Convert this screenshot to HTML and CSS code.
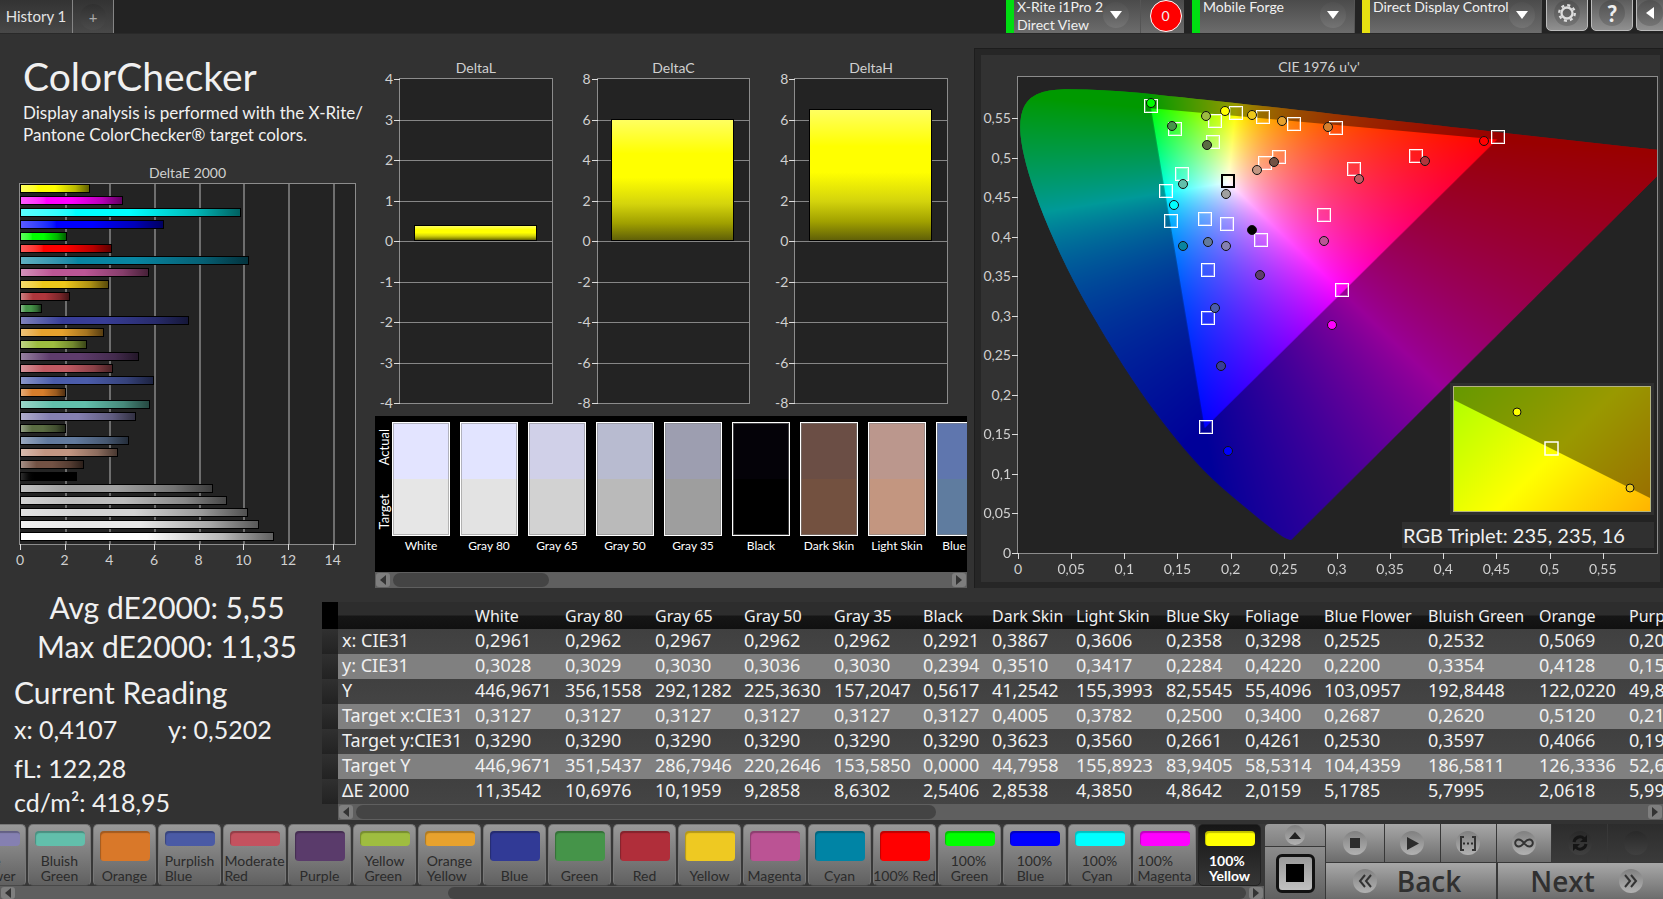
FILE: index.html
```html
<!DOCTYPE html>
<html lang="en">
<head>
<meta charset="utf-8">
<title>ColorChecker</title>
<link rel="stylesheet" href="styles.css">
</head>
<body>
<header class="topbar">
  <nav class="tabs">
    <button class="tab">History 1</button>
    <button class="tab tab-add" aria-label="Add history"><span class="knob">+</span></button>
  </nav>
  <div class="devices">
    <div class="device device-meter">
      <button class="picker green"><span>X-Rite i1Pro 2<br>Direct View</span><span class="knob"><i class="down"></i></span></button>
      <output class="counter"><span>0</span></output>
    </div>
    <button class="picker device-source green"><span>Mobile Forge</span><span class="knob"><i class="down"></i></span></button>
    <button class="picker device-display yellow"><span>Direct Display Control</span><span class="knob"><i class="down"></i></span></button>
    <button class="tool" aria-label="Settings"><span class="knob"><svg viewBox="0 0 24 24" width="22" height="22"><circle cx="12" cy="12" r="6" fill="none" stroke="#ddd" stroke-width="2.500"/><circle cx="12" cy="12" r="8.500" fill="none" stroke="#ddd" stroke-width="2.500" stroke-dasharray="3.300 3.376"/></svg></span></button>
    <button class="tool" aria-label="Help"><span class="knob help">?</span></button>
    <button class="tool" aria-label="Collapse"><span class="knob"><i class="left"></i></span></button>
  </div>
</header>

<main class="charts">
  <section class="summary">
    <h1>ColorChecker</h1>
    <p>Display analysis is performed with the X-Rite/<br>Pantone ColorChecker® target colors.</p>
    <h2 class="chart-title">DeltaE 2000</h2>
    <div class="plot de-plot" id="de"></div>
  </section>

  <section class="middle">
    <div class="deltas" id="deltas"></div>
    <div class="compare">
      <div class="compare-row">
        <div class="compare-side"><span>Actual</span><span>Target</span></div>
        <div class="swatches" id="swatches"></div>
      </div>
      <div class="scroll"><button aria-label="Scroll left"><i class="left"></i></button><div class="track"><div class="thumb thumb-compare"></div></div><button aria-label="Scroll right"><i class="right"></i></button></div>
    </div>
  </section>

  <section class="cie">
    <div class="cie-inner">
      <h2 class="chart-title">CIE 1976 u'v'</h2>
      <div class="plot cie-plot" id="cie">
        <canvas id="gamut" width="640" height="476"></canvas>
        <div class="inset">
          <svg viewBox="0 0 196 124" preserveAspectRatio="none">
            <defs><linearGradient id="yg" gradientUnits="userSpaceOnUse" x1="0" y1="0" x2="160" y2="160"><stop offset="0" stop-color="#af0"/><stop offset=".52" stop-color="#ff0"/><stop offset="1" stop-color="#ffb400"/></linearGradient></defs>
            <rect width="196" height="124" fill="url(#yg)"/>
            <path d="M0 13L196 111V0H0z" fill="#000" opacity=".4"/>
            <rect x="91" y="55" width="13" height="13" fill="none" stroke="#fff" stroke-width="1.500"/>
            <circle cx="63" cy="25" r="4" fill="#ff0" stroke="#111"/>
            <circle cx="176" cy="101" r="4" fill="#eec81b" stroke="#111"/>
          </svg>
        </div>
        <div class="triplet">RGB Triplet: 235, 235, 16</div>
      </div>
    </div>
  </section>
</main>

<section class="data">
  <div class="stats">
    <p class="big">Avg dE2000: 5,55</p>
    <p class="big">Max dE2000: 11,35</p>
    <h2>Current Reading</h2>
    <p class="pair"><span>x: 0,4107</span><span>y: 0,5202</span></p>
    <p class="lum">fL: 122,28</p>
    <p>cd/m²: 418,95</p>
  </div>
  <div class="table-area">
    <div class="table-clip"><table id="readings"></table></div>
    <div class="scroll scroll-table"><button aria-label="Scroll left"><i class="left"></i></button><div class="track"><div class="thumb thumb-table"></div></div><button aria-label="Scroll right"><i class="right"></i></button></div>
  </div>
</section>

<footer class="bottom">
  <div class="patches">
    <div class="patch-list" id="patches"></div>
    <div class="scroll scroll-patches"><button aria-label="Scroll left"><i class="left"></i></button><div class="track"><div class="thumb thumb-patches"></div></div><button aria-label="Scroll right"><i class="right"></i></button></div>
  </div>
  <div class="stopper">
    <button class="expand" aria-label="Expand"><span class="disc"><i class="up"></i></span></button>
    <button class="window" aria-label="Pattern window"><span></span></button>
  </div>
  <div class="transport">
    <div class="keys">
      <button aria-label="Stop"><span class="disc"><svg viewBox="0 0 24 24"><path d="M7 7h10v10H7z"/></svg></span></button>
      <button aria-label="Play"><span class="disc"><svg viewBox="0 0 24 24"><path d="M7 6l12 6.500L7 19z"/></svg></span></button>
      <button aria-label="Measure series"><span class="disc"><svg viewBox="0 0 24 24"><path d="M8 6H5v13h3M16 6h3v13h-3" fill="none" stroke="#333" stroke-width="2"/><path d="M7 11.500h2v2H7zM11 11.500h2v2h-2zM15 11.500h2v2h-2z"/></svg></span></button>
      <button aria-label="Continuous"><span class="disc"><svg viewBox="0 0 24 24"><path d="M12 12C10 9.500 8.500 8.500 6.700 8.500a3.500 3.500 0 0 0 0 7C8.500 15.500 10 14.500 12 12s3.500-3.500 5.300-3.500a3.500 3.500 0 0 1 0 7C15.500 15.500 14 14.500 12 12z" fill="none" stroke="#333" stroke-width="2"/></svg></span></button>
      <button class="off" aria-label="Refresh"><span class="disc"><svg viewBox="0 0 24 24"><path d="M6 11a6 6 0 0 1 10-3.500M18 13a6 6 0 0 1-10 3.500" fill="none" stroke="#151515" stroke-width="3"/><path d="M19 4v7h-7zM5 20v-7h7z" fill="#151515"/></svg></span></button>
      <button class="off" aria-label="Record"><span class="disc"></span></button>
    </div>
    <div class="steps">
      <button><span class="disc"><svg viewBox="0 0 24 24"><path d="M12 6l-5 6 5 6M18 6l-5 6 5 6" fill="none" stroke="#333" stroke-width="2"/></svg></span>Back</button>
      <button>Next<span class="disc"><svg viewBox="0 0 24 24"><path d="M6 6l5 6-5 6M12 6l5 6-5 6" fill="none" stroke="#333" stroke-width="2"/></svg></span></button>
    </div>
  </div>
</footer>
<script src="app.js"></script>
</body>
</html>
```
FILE: styles.css
```css
* { box-sizing: border-box; }
body {
  margin: 0; height: 100vh; min-height: 880px; display: flex; flex-direction: column;
  overflow: hidden; background: #323232; color: #f0f0f0;
  font-family: Lato, "Open Sans", sans-serif; font-size: 14px;
}
h1, h2, p { margin: 0; font-weight: 400; }
button { border: 0; padding: 0; margin: 0; font: inherit; color: inherit; background: none; }
i { display: block; width: 0; height: 0; }
.down { border: 6px solid transparent; border-top: 8px solid #fff; border-bottom: 0; }
.up { border: 6px solid transparent; border-bottom: 7px solid #222; border-top: 0; }
.left { border: 6px solid transparent; border-right: 8px solid #fff; border-left: 0; }
.right { border: 5px solid transparent; border-left: 6px solid #333; border-right: 0; }

/* top bar */
.topbar { height: 34px; flex: none; background: #232323; display: flex; justify-content: space-between; border-bottom: 1px solid #292929; overflow: hidden; }
.tabs { display: flex; }
.tab { width: 73px; border-right: 1px solid #858585; background: linear-gradient(#333, #484848); font-size: 15px; color: #e4e4e4; padding-bottom: 2px; }
.tab-add { width: 41px; display: flex; align-items: center; justify-content: center; padding: 0; }
.knob { width: 26px; height: 26px; flex: none; border-radius: 50%; background: linear-gradient(#505050, #747474); display: flex; align-items: center; justify-content: center; }
.tab-add .knob { background: linear-gradient(#303030, #4b4b4b); color: #aaa; }
.devices { display: flex; align-items: flex-end; }
.device { display: flex; margin-right: 8px; }
.picker {
  height: 35px; display: flex; justify-content: space-between; align-items: flex-start; text-align: left; white-space: nowrap;
  font-size: 14px; line-height: 18px; padding: 0 8px 0 3px; border-left: 8px solid; border-right: 1px solid #555;
  background: linear-gradient(#494949, #6c6c6c);
}
.picker .knob { margin-top: 4px; }
.green { border-left-color: #0d1; }
.yellow { border-left-color: #e6e011; }
.device-meter .picker { width: 135px; padding-right: 12px; }
.device-source { width: 163px; margin-right: 7px; }
.device-display { width: 180px; margin-right: 4px; }
.counter { width: 43px; display: flex; align-items: center; justify-content: center; padding-left: 6px; background: linear-gradient(#494949, #6c6c6c); }
.counter span { width: 32px; height: 32px; flex: none; border: 1px solid #fff; border-radius: 50%; background: #f00; display: flex; align-items: center; justify-content: center; }
.tool { width: 42px; height: 36px; margin: 0 3px 2px 0; border: 1px solid #bbb; border-radius: 5px; background: linear-gradient(#555, #909090); display: flex; align-items: center; justify-content: center; }
.tool:last-child { width: 27px; margin-right: 0; border-right: 0; border-radius: 5px 0 0 5px; justify-content: flex-end; }
.help { font-size: 22px; font-weight: 900; color: #eee; }

/* chart row */
.charts { flex: 1; min-height: 0; display: flex; }
.summary { width: 356px; margin-right: 19px; flex: none; padding: 20px 0 43px 19px; display: flex; flex-direction: column; }
.summary h1 { font-size: 39px; line-height: 45px; padding-left: 4px; margin-bottom: 3px; }
.summary p { font-size: 17px; line-height: 22px; padding-left: 4px; white-space: nowrap; }
.chart-title { font-size: 14px; line-height: 20px; text-align: center; color: #d0d0d0; }
.summary .chart-title { margin-top: 17px; }
.plot { position: relative; flex: 1; min-height: 0; background: #232323; border: 1px solid #8c8c8c; }
.line-v { position: absolute; top: 0; bottom: 0; width: 2px; background: #6e6e6e; }
.line-h { position: absolute; left: 0; right: 0; height: 1px; background: #868686; }
.tick-x { position: absolute; top: 100%; width: 60px; margin-left: -30px; padding-top: 6px; text-align: center; line-height: 20px; color: #d0d0d0; }
.tick-x::before { content: ""; position: absolute; left: 30px; top: 0; width: 1px; height: 6px; background: #ddd; }
.tick-y { position: absolute; right: 100%; width: 50px; margin-top: -10px; padding-right: 7px; text-align: right; line-height: 20px; color: #d0d0d0; }
.tick-y::after { content: ""; position: absolute; right: 0; top: 10px; width: 6px; height: 1px; background: #ddd; }
.bars { position: relative; height: 100%; display: grid; grid-auto-rows: 1fr; align-items: start; }
.bar { height: 9px; border: 1px solid #000; }

.middle { width: 592px; flex: none; margin-right: 7px; display: flex; flex-direction: column; }
.deltas { flex: 1; min-height: 0; display: flex; gap: 44px; padding: 24px 19px 12px 24px; }
.delta { flex: 1; display: flex; flex-direction: column; }
.delta .bar { position: absolute; left: 9%; right: 10%; height: auto; background: linear-gradient(#ffff60, #ff0 28%, #ff0 48%, #d4d40c 70%, #a0a000 86%, #606008); }
.compare { height: 172px; background: #000; color: #fff; display: flex; flex-direction: column; }
.compare-row { flex: 1; display: flex; padding: 6px 0 0; overflow: hidden; }
.compare-side { width: 17px; height: 114px; flex: none; display: flex; flex-direction: column; justify-content: space-between; align-items: center; padding: 7px 0; }
.compare-side span { writing-mode: vertical-rl; transform: rotate(180deg); font-size: 13px; line-height: 16px; }
.swatches { display: flex; gap: 10px; }
.swatch { width: 58px; flex: none; text-align: center; font-size: 12px; line-height: 20px; white-space: nowrap; }
.swatch-box { height: 114px; border: 1px solid #fff; outline: 1px solid rgba(128,128,128,.5); outline-offset: -2px; }

/* scroll bars */
.scroll { height: 16px; flex: none; display: flex; align-items: center; background: #5f5f5f; padding: 0 1px; gap: 3px; }
.scroll button { width: 14px; height: 14px; border-radius: 3px; background: #7e7e7e; display: flex; align-items: center; justify-content: center; }
.scroll .left { border-width: 5px 6px 5px 0; border-right-color: #333; }
.track { flex: 1; height: 14px; }
.thumb { height: 100%; border-radius: 7px; background: #444; }
.thumb-compare { width: 28%; }
.thumb-table { width: 45%; }
.thumb-patches { width: 65%; margin-left: auto; }

/* chromaticity panel */
.cie { flex: 1; min-width: 0; margin-top: 14px; padding: 6px 3px 6px 6px; background: #262626; border: 1px solid #1d1d1d; border-width: 1px 0 0 1px; }
.cie-inner { height: 100%; background: #323232; padding: 2px 2px 28px 36px; display: flex; flex-direction: column; }
.cie .chart-title { padding-right: 37px; line-height: 19px; }
#gamut { position: absolute; width: 100%; height: 100%; }
.target { position: absolute; width: 14px; height: 14px; margin: -7px -6px; border: 1px solid #fff; outline: 1px solid rgba(255,255,255,.3); outline-offset: -2px; }
.target-white { border: 2px solid #000; outline: 0; }
.reading { position: absolute; width: 10px; height: 10px; margin: -5px; border: 1px solid #111; border-radius: 50%; }
.inset { position: absolute; right: 3px; bottom: 38px; width: 204px; height: 132px; border: 3px solid #2f2f2f; }
.inset svg { display: block; width: 100%; height: 100%; border: 1px solid #b4b480; }
.triplet { position: absolute; right: 3px; bottom: 5px; width: 252px; line-height: 26px; font-size: 20px; padding-left: 1px; background: #303030; white-space: nowrap; }

/* readings */
.data { flex: none; display: flex; padding-bottom: 4px; }
.stats { width: 322px; height: 232px; flex: none; padding-left: 14px; white-space: nowrap; }
.stats p { font-size: 25px; line-height: 34px; }
.stats .big { font-size: 30px; line-height: 39px; text-align: center; padding-right: 2px; }
.stats h2 { font-size: 30px; line-height: 40px; margin-top: 6px; }
.pair { display: flex; }
.pair span { width: 158px; }
.stats .lum { margin-top: 5px; }
.table-area { flex: 1; min-width: 0; padding-top: 14px; }
.table-clip { overflow: hidden; }
table { border-collapse: collapse; table-layout: fixed; width: 1410px; font-family: "Noto Sans", sans-serif; font-size: 18px; }
th, td { height: 25px; padding: 0 0 0 4px; line-height: 24px; text-align: left; font-weight: 400; white-space: nowrap; overflow: hidden; }
td { line-height: 23px; vertical-align: top; }
thead th { height: 27px; font-size: 16px; background: linear-gradient(#2d2d2d 0 48%, #161616 52%, #101010); }
thead th:first-child { background: #000; }
tbody tr { background: linear-gradient(#404040, #444); }
tbody tr:nth-child(even) { background: #808080; }
tbody td:first-child { background: linear-gradient(#303030, #222); }
.scroll-table { margin-left: 16px; }

/* bottom strip */
.bottom { height: 75px; flex: none; display: flex; background: #383838; }
.patches { flex: 1; min-width: 0; display: flex; flex-direction: column; }
.patch-list { flex: 1; display: flex; gap: 2px; justify-content: flex-end; overflow: hidden; padding: 0 3px 0 0; }
.patch {
  width: 63px; height: 62px; flex: none; border-radius: 5px; padding: 6px 0 2px; display: flex; flex-direction: column; align-items: center; justify-content: space-between;
  background: linear-gradient(#999, #606060); border: 1px solid #777; border-bottom-color: #484848; color: #2b2b2b; font-size: 14px; line-height: 15px; text-align: left; white-space: nowrap;
}
.chip { width: 50px; height: 15px; flex: none; border-radius: 4px; box-shadow: inset 1px 2px 1px rgba(0,0,0,.25); }
.chip-tall { height: 30px; }
.patch-active { background: linear-gradient(#161616, #363636); border-color: #222; color: #fff; font-weight: 700; }
.scroll-patches { height: 13px; }
.scroll-patches button, .scroll-patches .track { height: 12px; }
.stopper { width: 62px; display: flex; flex-direction: column; padding: 0 1px; gap: 1px; }
.expand { height: 22px; border-radius: 4px 4px 0 0; background: linear-gradient(#9a9a9a, #808080); display: flex; align-items: center; justify-content: center; }
.expand .disc { width: 20px; height: 20px; }
.window { flex: 1; background: linear-gradient(#8c8c8c, #606060); display: flex; align-items: center; justify-content: center; }
.window span { width: 39px; height: 39px; border: 3px solid #111; border-radius: 6px; background: linear-gradient(#000, #000) center / 18px 18px no-repeat, linear-gradient(#999, #c0c0c0); }
.transport { width: 337px; display: grid; grid-template-rows: 38px 36px; gap: 1px; }
.keys { display: grid; grid-template-columns: 58px repeat(5, 1fr); gap: 1px; }
.steps { display: grid; grid-template-columns: 1fr 165px; gap: 2px; }
.keys button, .steps button { background: linear-gradient(#a8a8a8, #6c6c6c); display: flex; align-items: center; justify-content: center; }
.keys .off { background: linear-gradient(#2c2c2c, #3b3b3b); }
.disc { width: 24px; height: 24px; flex: none; border-radius: 50%; background: linear-gradient(#808080, #b2b2b2); display: flex; align-items: center; justify-content: center; }
.off .disc { background: linear-gradient(#292929, #404040); }
.disc svg { width: 24px; height: 24px; fill: #2c2c2c; }
.steps button { gap: 20px; font-family: "Open Sans", sans-serif; font-weight: 600; font-size: 28px; line-height: 34px; color: #303030; padding-right: 8px; }
.steps button + button { gap: 24px; padding: 0 0 0 12px; }
```
FILE: app.js
```js
const byId = id => document.getElementById(id);
const add = (parent, cls, css = {}, text = "", tag = "div") => {
  const el = document.createElement(tag);
  if (cls) el.className = cls;
  Object.assign(el.style, css);
  el.textContent = text;
  parent.append(el);
  return el;
};
const comma = n => String(n).replace(".", ",");

/* DeltaE 2000 */
const de = [
  ["#ffff00", 3.15], ["#ff00ff", 4.6], ["#00ffff", 9.9], ["#0000ff", 6.45], ["#00ff00", 2.1], ["#ff0000", 4.12],
  ["#0885a1", 10.25], ["#bb5695", 5.77], ["#eec81b", 4], ["#af363c", 2.23], ["#469449", 1], ["#383d96", 7.57],
  ["#e6a22e", 3.77], ["#9dbc40", 3.02], ["#5e3c6c", 5.33], ["#c15a63", 4.17], ["#4b5caa", 5.99], ["#d67e2c", 2.06],
  ["#62bfab", 5.8], ["#8580b1", 5.18], ["#5a6c42", 2.06], ["#627a9d", 4.86], ["#c29682", 4.385], ["#735244", 2.85],
  ["#000000", 2.54], ["#a0a0a0", 8.63], ["#bcbcbc", 9.286], ["#d4d4d4", 10.196], ["#e8e8e8", 10.7], ["#ffffff", 11.354]
];
const dePlot = byId("de");
for (let n = 0; n < 15; n += 2) {
  const left = n / 15 * 100 + "%";
  if (n) add(dePlot, "line-v", { left });
  add(dePlot, "tick-x", { left }, n);
}
const bars = add(dePlot, "bars");
for (const [c, v] of de) {
  add(bars, "bar", {
    width: v / 15 * 100 + "%",
    background: `linear-gradient(90deg, color-mix(in srgb, ${c} 65%, #fff ${c === "#000000" ? 15 : 35}%), ${c} 25%, ${c} 50%, color-mix(in srgb, ${c} 72%, #000) 80%, color-mix(in srgb, ${c} 38%, #000))`
  });
}

/* DeltaL, DeltaC, DeltaH */
for (const [name, max, value] of [["DeltaL", 4, 0.4], ["DeltaC", 8, 6.02], ["DeltaH", 8, 6.5]]) {
  const box = add(byId("deltas"), "delta");
  add(box, "chart-title", {}, name, "h2");
  const plot = add(box, "plot");
  for (let k = -4; k <= 4; k++) {
    const top = (4 - k) / 8 * 100 + "%";
    if (Math.abs(k) < 4) add(plot, "line-h", { top });
    add(plot, "tick-y", { top }, k * max / 4);
  }
  add(plot, "bar", { bottom: "50%", top: (1 - value / max) * 50 + "%" });
}

/* Actual / target swatches */
for (const [name, a, t] of [
  ["White", "#e3e4ff", "#e6e6e6"], ["Gray 80", "#e2e4ff", "#e3e3e3"], ["Gray 65", "#d0d0e8", "#d2d2d2"],
  ["Gray 50", "#b8bbd0", "#bababa"], ["Gray 35", "#9d9eb0", "#9e9e9e"], ["Black", "#040208", "#000"],
  ["Dark Skin", "#6b4e45", "#735140"], ["Light Skin", "#bb978d", "#c39680"], ["Blue Sky", "#5f76ae", "#5f7c9f"]
]) {
  const s = add(byId("swatches"), "swatch");
  add(s, "swatch-box", { background: `linear-gradient(${a} 50%, ${t} 50%)` });
  s.append(name);
}

/* CIE 1976 diagram */
const cie = byId("cie");
const U = 0.601, V = 0.602;
for (let k = 0; k < 12; k++) {
  const t = k * 5 / 100;
  add(cie, "tick-x", { left: t / U * 100 + "%" }, comma(t));
  add(cie, "tick-y", { top: (1 - t / V) * 100 + "%" }, comma(t));
}
const canvas = byId("gamut"), ctx = canvas.getContext("2d");
const W = canvas.width, H = canvas.height;
const locus = [
  [.1741, .005], [.1714, .0051], [.1644, .0109], [.1566, .0177], [.144, .0297], [.1355, .0399], [.1241, .0578],
  [.1096, .0868], [.0913, .1327], [.0687, .2007], [.0454, .295], [.0235, .4127], [.0082, .5384], [.0039, .6548],
  [.0139, .7502], [.0389, .812], [.0743, .8338], [.1142, .8262], [.1547, .8059], [.2296, .7543], [.3016, .6923],
  [.3731, .6245], [.4441, .5547], [.5125, .4866], [.5752, .4242], [.627, .3725], [.6915, .3083], [.7347, .2653]
];
const toPx = ([x, y]) => {
  const d = -2 * x + 12 * y + 3;
  return [4 * x / d / U * W, (1 - 9 * y / d / V) * H];
};
const img = new ImageData(W, H);
for (let j = 0; j < H; j++) {
  for (let i = 0; i < W; i++) {
    const u = (i + .5) / W * U, v = (1 - (j + .5) / H) * V;
    const X = 9 * u / (4 * v), Z = (12 - 3 * u - 20 * v) / (4 * v);
    const rgb = [3.2406 * X - 1.5372 - .4986 * Z, -.9689 * X + 1.8758 + .0415 * Z, .0557 * X - .204 + 1.057 * Z].map(c => Math.max(c, 0));
    const m = Math.max(...rgb), o = (j * W + i) * 4;
    rgb.forEach((c, k) => { img.data[o + k] = 255 * Math.pow(c / m, 1 / 1.15); });
    img.data[o + 3] = 255;
  }
}
const full = document.createElement("canvas");
full.width = W;
full.height = H;
full.getContext("2d").putImageData(img, 0, 0);
const outline = new Path2D();
const pts = locus.map(toPx);
outline.moveTo(...pts[0]);
for (let k = 1; k < pts.length - 1; k++) {
  const [x, y] = pts[k], [nx, ny] = pts[k + 1];
  outline.quadraticCurveTo(x, y, (x + nx) / 2, (y + ny) / 2);
}
outline.lineTo(...pts[pts.length - 1]);
outline.closePath();
ctx.clip(outline);
ctx.drawImage(full, 0, 0);
const shade = new Path2D();
shade.rect(0, 0, W, H);
[[.64, .33], [.3, .6], [.15, .06]].map(toPx).forEach((p, k) => k ? shade.lineTo(...p) : shade.moveTo(...p));
shade.closePath();
ctx.fillStyle = "rgba(0,0,0,.4)";
ctx.fill(shade, "evenodd");

const at = (x, y) => ({ left: x / 640 * 100 + "%", top: y / 476 * 100 + "%" });
for (const [x, y] of [
  [132, 29], [156, 52], [196, 44], [217, 36], [244, 40], [275, 47], [194, 65], [246, 86], [260, 80], [163, 97],
  [147, 114], [152, 144], [186, 142], [208, 147], [242, 163], [189, 193], [189, 241], [187, 350], [317, 51],
  [336, 92], [398, 79], [480, 60], [305, 138], [324, 213]
]) add(cie, "target", at(x, y));
add(cie, "target target-white", at(209, 104));
for (const [x, y, background] of [
  [133, 26, "#00ff00"], [154, 49, "#469449"], [188, 39, "#9dbc40"], [207, 34, "#ffff00"], [234, 38, "#eec81b"],
  [264, 44, "#e6a22e"], [189, 68, "#5a6c42"], [239, 93, "#c29682"], [256, 85, "#735244"], [165, 107, "#62bfab"],
  [208, 117, "#a0a0a0"], [156, 128, "#00ffff"], [234, 153, "#000"], [165, 169, "#0885a1"], [190, 165, "#627a9d"],
  [208, 169, "#8580b1"], [242, 198, "#5e3c6c"], [197, 231, "#4b5caa"], [310, 50, "#d67e2c"], [467, 64, "#ff0000"],
  [408, 84, "#af363c"], [342, 102, "#c15a63"], [306, 164, "#bb5695"], [314, 248, "#ff00ff"], [203, 289, "#383d96"],
  [210, 374, "#0000ff"]
]) add(cie, "reading", { ...at(x, y), background });

/* Readings table */
const widths = [16, 133, 90, 90, 89, 90, 89, 69, 84, 90, 79, 79, 104, 111, 90, 107];
const head = ["", "", "White", "Gray 80", "Gray 65", "Gray 50", "Gray 35", "Black", "Dark Skin", "Light Skin", "Blue Sky", "Foliage", "Blue Flower", "Bluish Green", "Orange", "Purplish Blue"];
const rows = `x: CIE31|0,2961|0,2962|0,2967|0,2962|0,2962|0,2921|0,3867|0,3606|0,2358|0,3298|0,2525|0,2532|0,5069|0,20
y: CIE31|0,3028|0,3029|0,3030|0,3036|0,3030|0,2394|0,3510|0,3417|0,2284|0,4220|0,2200|0,3354|0,4128|0,15
Y|446,9671|356,1558|292,1282|225,3630|157,2047|0,5617|41,2542|155,3993|82,5545|55,4096|103,0957|192,8448|122,0220|49,8
Target x:CIE31|0,3127|0,3127|0,3127|0,3127|0,3127|0,3127|0,4005|0,3782|0,2500|0,3400|0,2687|0,2620|0,5120|0,21
Target y:CIE31|0,3290|0,3290|0,3290|0,3290|0,3290|0,3290|0,3623|0,3560|0,2661|0,4261|0,2530|0,3597|0,4066|0,19
Target Y|446,9671|351,5437|286,7946|220,2646|153,5850|0,0000|44,7958|155,8923|83,9405|58,5314|104,4359|186,5811|126,3336|52,6
ΔE 2000|11,3542|10,6976|10,1959|9,2858|8,6302|2,5406|2,8538|4,3850|4,8642|2,0159|5,1785|5,7995|2,0618|5,99`;
const table = byId("readings");
const hr = add(add(table, "", {}, "", "thead"), "", {}, "", "tr");
head.forEach((t, k) => add(hr, "", { width: widths[k] + "px" }, t, "th"));
const body = add(table, "", {}, "", "tbody");
for (const line of rows.split("\n")) {
  const tr = add(body, "", {}, "", "tr");
  ["", ...line.split("|")].forEach(t => add(tr, "", {}, t, "td"));
}

/* Patch strip */
for (const [name, background] of [
  ["Blue\nFlower", "#8580b1"], ["Bluish\nGreen", "#62bfab"], ["Orange", "#d97829"], ["Purplish\nBlue", "#4a5aa5"],
  ["Moderate\nRed", "#c4525f"], ["Purple", "#5a3b6b"], ["Yellow\nGreen", "#9fbd40"], ["Orange\nYellow", "#e8a22d"],
  ["Blue", "#313a96"], ["Green", "#459449"], ["Red", "#b02e3a"], ["Yellow", "#eec922"], ["Magenta", "#bb5394"],
  ["Cyan", "#0084a5"], ["100% Red", "#ff0000"], ["100%\nGreen", "#00ff00"], ["100%\nBlue", "#0000ff"],
  ["100%\nCyan", "#00ffff"], ["100%\nMagenta", "#ff00ff"], ["100%\nYellow", "#ffff00"]
]) {
  const b = add(byId("patches"), name === "100%\nYellow" ? "patch patch-active" : "patch", {}, "", "button");
  add(b, name.includes("\n") ? "chip" : "chip chip-tall", { background }, "", "span");
  add(b, "", {}, "", "span").innerHTML = name.replace("\n", "<br>");
}
```
